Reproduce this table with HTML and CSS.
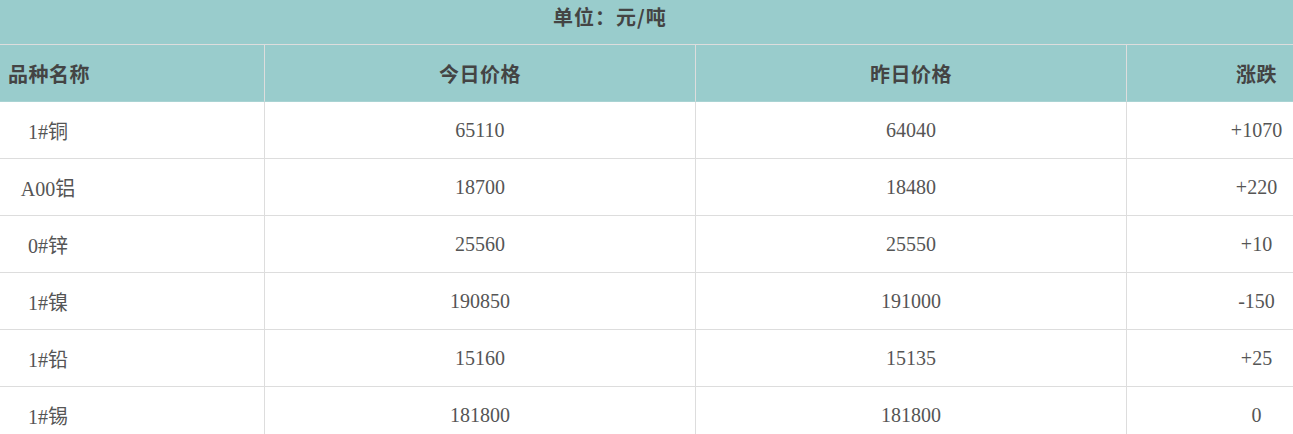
FILE: index.html
```html
<!DOCTYPE html>
<html lang="zh-CN">
<head>
<meta charset="utf-8">
<title>金属价格</title>
<link rel="stylesheet" href="styles.css">
</head>
<body>
<div class="wrap">
  <div class="unit">单位：元/吨</div>
  <table class="price">
    <colgroup>
      <col class="c1"><col class="c2"><col class="c3"><col class="c4">
    </colgroup>
    <thead>
      <tr>
        <th class="name-h">品种名称</th>
        <th>今日价格</th>
        <th>昨日价格</th>
        <th>涨跌</th>
      </tr>
    </thead>
    <tbody>
      <tr><td class="name">1#铜</td><td>65110</td><td>64040</td><td>+1070</td></tr>
      <tr><td class="name">A00铝</td><td>18700</td><td>18480</td><td>+220</td></tr>
      <tr><td class="name">0#锌</td><td>25560</td><td>25550</td><td>+10</td></tr>
      <tr><td class="name">1#镍</td><td>190850</td><td>191000</td><td>-150</td></tr>
      <tr><td class="name">1#铅</td><td>15160</td><td>15135</td><td>+25</td></tr>
      <tr><td class="name">1#锡</td><td>181800</td><td>181800</td><td>0</td></tr>
    </tbody>
  </table>
</div>
</body>
</html>
```

FILE: styles.css
```css
html, body {
  margin: 0;
  padding: 0;
  background: #fff;
}

.wrap {
  width: 1293px;
  overflow: hidden;
  font-family: "Liberation Serif", "Noto Sans CJK SC", serif;
  color: #444;
}

.unit {
  height: 44px;
  line-height: 34px;
  padding-left: 553px;
  background: #99cccc;
  border-bottom: 1px solid #dddddd;
  font-family: "Noto Sans CJK SC", sans-serif;
  font-size: 20px;
  letter-spacing: 1px;
  font-weight: bold;
  color: #444;
}

.price {
  width: 1387px;
  table-layout: fixed;
  border-collapse: separate;
  border-spacing: 0;
}

.c1 { width: 265px; }
.c2 { width: 431px; }
.c3 { width: 431px; }
.c4 { width: 260px; }

.price th,
.price td {
  padding: 0;
  height: 56px;
  border-right: 1px solid #dddddd;
  border-bottom: 1px solid #dddddd;
  text-align: center;
  vertical-align: middle;
  white-space: nowrap;
}

.price th {
  background: #99cccc;
  border-bottom-color: #a9d3d3;
  font-family: "Noto Sans CJK SC", sans-serif;
  font-size: 20px;
  letter-spacing: 0.5px;
  font-weight: bold;
  color: #444;
}

.price th.name-h {
  text-align: left;
  padding-left: 8px;
}

.price td {
  font-size: 20px;
  color: #555;
}

.price td.name {
  padding-right: 168px;
}
```
